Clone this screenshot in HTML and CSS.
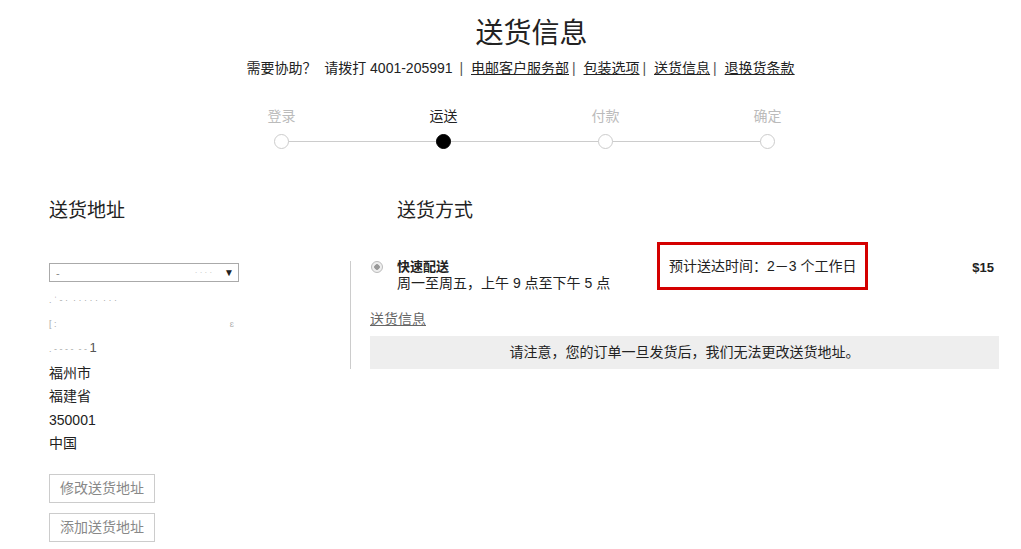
FILE: index.html
```html
<!DOCTYPE html>
<html lang="zh-CN">

<head>
    <meta charset="UTF-8">
    <meta name="viewport" content="width=device-width, initial-scale=1.0">
    <title>送货信息</title>
    <link rel="stylesheet" href="styles.css">
</head>

<body>
    <div class="header">
        <h1 class="title">送货信息</h1>
        <p class="help">
            需要协助？&nbsp; 请拨打 4001-205991 <span class="sep">|</span>
            <a href="#">电邮客户服务部</a><span class="sep">|</span>
            <a href="#">包装选项</a><span class="sep">|</span>
            <a href="#">送货信息</a><span class="sep">|</span>
            <a href="#">退换货条款</a>
        </p>
        <!-- 结账步骤 -->
        <ol class="steps">
            <li><span class="step_name">登录</span><i class="dot"></i></li>
            <li class="active"><span class="step_name">运送</span><i class="dot"></i></li>
            <li><span class="step_name">付款</span><i class="dot"></i></li>
            <li><span class="step_name">确定</span><i class="dot"></i></li>
        </ol>
    </div>

    <div class="main">
        <!-- 左侧：送货地址 -->
        <div class="address">
            <h2 class="sub_title">送货地址</h2>
            <div class="select_box">
                <span class="select_text">-</span>
                <span class="select_hint">· · · ·</span>
                <span class="select_arrow">▼</span>
            </div>
            <ul class="address_lines">
                <li class="blur">. ˈ ‐ ·  · · · · ·  · · ·</li>
                <li class="blur blur_row"><span>[ :</span><span>ɛ</span></li>
                <li class="blur">. ‐ ‐ ‐ ‐  ‐ ‐ <b>1</b></li>
                <li>福州市</li>
                <li>福建省</li>
                <li>350001</li>
                <li>中国</li>
            </ul>
            <a class="btn" href="#">修改送货地址</a>
            <a class="btn" href="#">添加送货地址</a>
        </div>

        <!-- 右侧：送货方式 -->
        <div class="shipping">
            <h2 class="sub_title shipping_title">送货方式</h2>
            <div class="shipping_body">
                <div class="divider"></div>
                <div class="shipping_content">
                    <div class="option">
                        <div class="option_info">
                            <i class="radio"></i>
                            <div class="option_text">
                                <strong>快速配送</strong>
                                <span>周一至周五，上午 9 点至下午 5 点</span>
                            </div>
                        </div>
                        <div class="estimate">预计送达时间：2－3 个工作日</div>
                        <div class="price">$15</div>
                    </div>
                    <a class="info_link" href="#">送货信息</a>
                    <div class="notice">请注意，您的订单一旦发货后，我们无法更改送货地址。</div>
                </div>
            </div>
        </div>
    </div>
</body>

</html>
```

FILE: styles.css
```css
* {
    margin: 0;
    padding: 0;
    box-sizing: border-box;
}

body {
    background-color: #fff;
    color: #222;
    font-family: "Liberation Sans", "Noto Sans CJK SC", sans-serif;
    font-size: 14px;
}

li {
    list-style: none;
}

a {
    color: #222;
}

/* 顶部 */
.header {
    padding-left: 20px;
    text-align: center;
}

.title {
    padding-top: 16px;
    padding-left: 22px;
    height: 58px;
    line-height: 36px;
    font-size: 28px;
    font-weight: normal;
    color: #222;
}

.help {
    line-height: 20px;
    font-size: 14px;
}

.help .sep {
    margin: 0 4px 0 3px;
    color: #555;
}

.steps {
    position: relative;
    display: flex;
    justify-content: center;
    margin-top: 28px;
    padding-left: 8px;
}

.steps::before {
    content: '';
    position: absolute;
    left: 50%;
    top: 35px;
    width: 487px;
    height: 1px;
    margin-left: -237px;
    background-color: #ccc;
}

.steps li {
    position: relative;
    display: flex;
    flex-direction: column;
    align-items: center;
    width: 162px;
}

.step_name {
    line-height: 20px;
    color: #bbb;
}

.dot {
    display: block;
    width: 15px;
    height: 15px;
    margin-top: 8px;
    border: 1px solid #ccc;
    border-radius: 50%;
    background-color: #fff;
}

.steps .active .step_name {
    color: #222;
}

.steps .active .dot {
    border-color: #000;
    background-color: #000;
}

/* 主体 */
.main {
    display: flex;
    padding: 50px 0 0 49px;
}

.sub_title {
    height: 64px;
    line-height: 24px;
    font-size: 19px;
    font-weight: normal;
    color: #222;
}

.address {
    width: 301px;
}

.select_box {
    display: flex;
    align-items: center;
    width: 190px;
    height: 19px;
    padding: 0 4px 0 6px;
    border: 1px solid #aaa;
    font-size: 11px;
}

.select_text {
    color: #888;
}

.select_hint {
    margin-left: auto;
    margin-right: 12px;
    font-size: 8px;
    color: #bbb;
}

.select_arrow {
    font-size: 10px;
    color: #222;
}

.address_lines {
    margin-top: 7px;
    line-height: 23.5px;
    font-size: 14px;
}

.blur {
    font-size: 9px;
    color: #aaa;
    white-space: pre;
}

.blur b {
    font-size: 13px;
    font-weight: normal;
    color: #555;
}

.blur_row {
    display: flex;
    justify-content: space-between;
    width: 185px;
}

.btn {
    display: block;
    width: 106px;
    height: 29px;
    margin-top: 18px;
    line-height: 27px;
    border: 1px solid #ccc;
    color: #888;
    text-align: center;
    text-decoration: none;
}

.btn + .btn {
    margin-top: 10px;
}

.shipping {
    flex: 1;
    padding-right: 22px;
}

.shipping_title {
    padding-left: 47px;
    height: 43px;
}

.shipping_body {
    display: flex;
}

.divider {
    width: 1px;
    height: 108px;
    margin-top: 19px;
    margin-right: 19px;
    background-color: #ccc;
}

.shipping_content {
    flex: 1;
}

.option {
    display: flex;
    align-items: flex-start;
}

.option_info {
    display: flex;
    width: 287px;
    padding-top: 17px;
}

.radio {
    display: block;
    width: 12px;
    height: 12px;
    margin: 2px 0 0 1px;
    border: 1px solid #bbb;
    border-radius: 50%;
    background: radial-gradient(circle, #999 0, #999 2.5px, #eee 3px);
}

.option_text {
    display: flex;
    flex-direction: column;
    margin-left: 14px;
    line-height: 16px;
}

.option_text strong {
    font-size: 13px;
}

.estimate {
    height: 48px;
    padding: 0 9px;
    line-height: 42px;
    border: 3px solid #d40000;
}

.price {
    flex: 1;
    padding: 16px 5px 0 0;
    line-height: 20px;
    text-align: right;
    font-weight: bold;
    font-size: 13px;
}

.info_link {
    display: inline-block;
    margin-top: 18px;
    line-height: 20px;
    color: #666;
}

.notice {
    height: 33px;
    margin-top: 7px;
    line-height: 33px;
    background-color: #eee;
    text-align: center;
}
```
